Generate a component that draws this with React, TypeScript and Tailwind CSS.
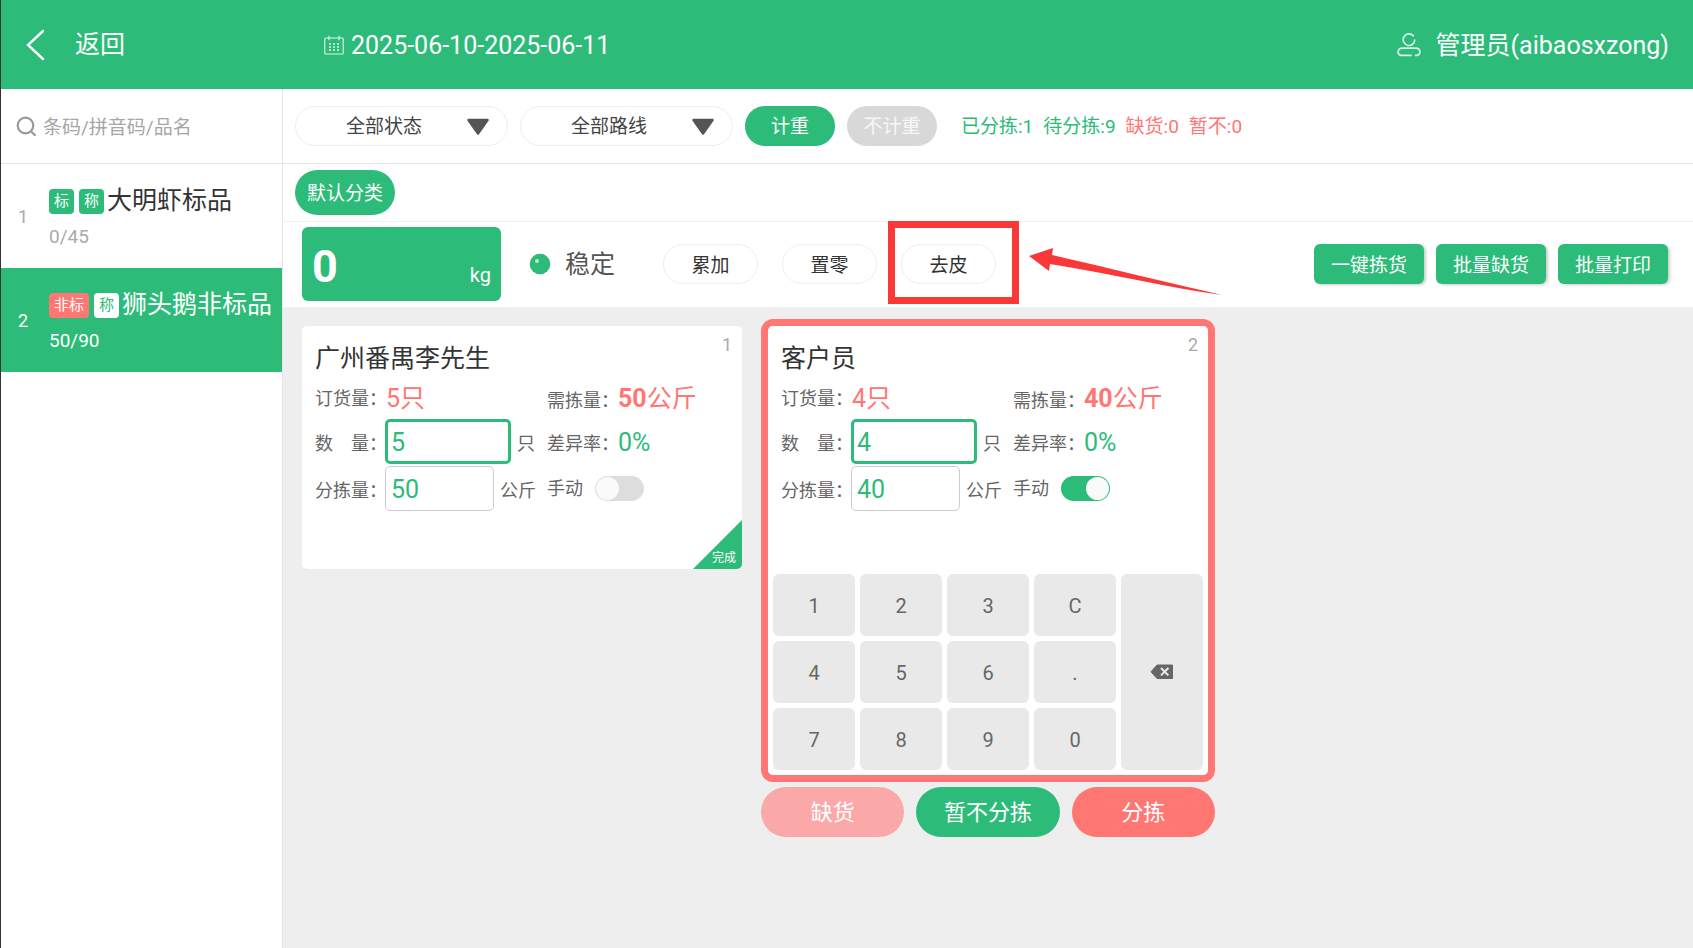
import React, { useState } from 'react';
import clsx from 'clsx';

interface Goods {
    id: number;
    name: string;
    standard: boolean;
    progress: string;
}

interface Order {
    id: number;
    customer: string;
    ordered: string;
    needed: string;
    count: string;
    sorted: string;
    manual: boolean;
    done: boolean;
}

const goodsList: Goods[] = [
    { id: 1, name: '大明虾标品', standard: true, progress: '0/45' },
    { id: 2, name: '狮头鹅非标品', standard: false, progress: '50/90' },
];

const orders: Order[] = [
    { id: 1, customer: '广州番禺李先生', ordered: '5', needed: '50', count: '5', sorted: '50', manual: false, done: true },
    { id: 2, customer: '客户员', ordered: '4', needed: '40', count: '4', sorted: '40', manual: true, done: false },
];

const keys = ['1', '2', '3', 'C', '4', '5', '6', '.', '7', '8', '9', '0'];

const CalendarIcon = () => (
    <svg className="opacity-85" width="20" height="20" viewBox="0 0 20 20" fill="none" stroke="currentColor" strokeWidth="1.1">
        <rect x="0.8" y="3" width="18.4" height="16" rx="1" />
        <path d="M5 0.8v4.4M15 0.8v4.4" />
        <path d="M5 9h2M9 9h2M13 9h2M5 12h2M9 12h2M13 12h2M5 15h2M9 15h2M13 15h2" strokeWidth="1.5" />
    </svg>
);

const UserIcon = () => (
    <svg className="opacity-80" width="24" height="24" viewBox="0 0 24 24" fill="none" stroke="currentColor" strokeWidth="1.7" strokeLinecap="round">
        <path d="M16.4 2.9A5.8 5.8 0 1 0 17.8 7" />
        <path d="M14 22.4H4.4a3.3 3.3 0 0 1-3.3-3.4c0-2.4 1.8-3.8 4.2-3.8h13.4c2.4 0 4.2 1.4 4.2 3.8a3.3 3.3 0 0 1-3.3 3.4h-1" />
    </svg>
);

const Header = () => (
    <header className="flex h-[89px] items-center bg-[#2dbb79] text-[25px] text-white">
        <div className="flex w-[323px] shrink-0 items-center pl-6">
            <button className="flex items-center gap-[30px]">
                <svg width="20" height="32" viewBox="0 0 20 32" fill="none" stroke="currentColor" strokeWidth="2.4" strokeLinecap="round">
                    <path d="M18 2L3 16l15 14" />
                </svg>
                返回
            </button>
        </div>
        <button className="flex items-center gap-[7px]">
            <CalendarIcon />
            <span className="pt-0.5">2025-06-10-2025-06-11</span>
        </button>
        <div className="ml-auto flex items-center gap-[15px] pr-6">
            <UserIcon />
            <span className="pt-0.5">管理员(aibaosxzong)</span>
        </div>
    </header>
);

const Tag = ({ text, color }: { text: string; color: string }) => (
    <span className={clsx('rounded-sm px-[5px] text-[15px] leading-[25px]', color)}>{text}</span>
);

const Sidebar = () => {
    const [active, setActive] = useState(2);

    return (
        <aside className="w-[282px] shrink-0 border-r border-[#e6e6e6] bg-white">
            <label className="flex h-[75px] items-center gap-1.5 border-b border-[#e6e6e6] pl-[15px] text-[#999]">
                <svg className="shrink-0" width="21" height="21" viewBox="0 0 21 21" fill="none" stroke="currentColor" strokeWidth="2.2" strokeLinecap="round">
                    <circle cx="9.5" cy="9.5" r="7.8" />
                    <path d="M15 15.5l4 3.6" />
                </svg>
                <input
                    type="text"
                    aria-label="搜索"
                    placeholder="条码/拼音码/品名"
                    className="w-full min-w-0 pt-1 text-[19px] outline-none placeholder:text-[#a6a6a6]"
                />
            </label>
            {goodsList.map((item) => {
                const on = item.id === active;
                return (
                    <button
                        key={item.id}
                        onClick={() => setActive(item.id)}
                        className={clsx('flex h-[104px] w-full items-center text-left', on ? 'bg-[#2dbb79] text-white' : 'bg-white text-[#333]')}
                    >
                        <span className={clsx('w-12 shrink-0 pl-[17px] text-[18px]', !on && 'text-[#aaa]')}>{item.id}</span>
                        <span className="flex flex-col gap-1 pt-1.5">
                            <span className="flex items-center whitespace-nowrap">
                                <span className="mr-[3px] flex gap-[5px]">
                                    {item.standard ? (
                                        <Tag text="标" color="bg-[#2dbb79] text-white" />
                                    ) : (
                                        <Tag text="非标" color="bg-[#ff7673] text-white" />
                                    )}
                                    <Tag text="称" color={on ? 'bg-white text-[#2dbb79]' : 'bg-[#2dbb79] text-white'} />
                                </span>
                                <span className="text-[25px] leading-8">{item.name}</span>
                            </span>
                            <span className={clsx('text-[19px] leading-8', !on && 'text-[#aaa]')}>{item.progress}</span>
                        </span>
                    </button>
                );
            })}
        </aside>
    );
};

const FilterSelect = ({ label }: { label: string }) => (
    <div className="relative">
        <select
            aria-label={label}
            className="h-10 w-[213px] appearance-none rounded-full border border-[#eee] bg-white pt-1 pl-[50px] text-[19px] text-[#444] outline-none"
        >
            <option>{label}</option>
        </select>
        <svg className="pointer-events-none absolute top-3 right-[18px]" width="24" height="18" viewBox="0 0 24 18">
            <path d="M2.5 2h19l-9.5 13.5z" fill="#555" stroke="#555" strokeWidth="2.5" strokeLinejoin="round" />
        </svg>
    </div>
);

const FilterBar = () => (
    <div className="flex h-[75px] items-center gap-3 border-b border-[#e6e6e6] px-3 pb-px text-[19px]">
        <FilterSelect label="全部状态" />
        <FilterSelect label="全部路线" />
        <button className="h-10 w-[90px] rounded-full bg-[#2dbb79] pt-1 text-white">计重</button>
        <button className="h-10 w-[90px] rounded-full bg-[#d8d8d8] pt-1 text-white/80">不计重</button>
        <div className="ml-3 flex gap-2.5 pt-1 text-[#2dbb79]">
            <span>已分拣:1</span>
            <span>待分拣:9</span>
            <span className="text-[#ff7673]">缺货:0</span>
            <span className="text-[#ff7673]">暂不:0</span>
        </div>
    </div>
);

const pill = 'h-10 w-[95px] rounded-full border border-[#eee] bg-white pt-1 text-[19px] text-[#333]';

const ScaleBar = () => (
    <div className="flex h-[85px] items-center pr-[25px] pb-px pl-[19px]">
        <div className="flex h-[74px] w-[199px] items-end justify-between rounded-md bg-[#2dbb79] px-2.5 text-white">
            <span className="self-center pt-1 text-[45px] leading-none font-bold">0</span>
            <span className="pb-3 text-[20px] leading-7">kg</span>
        </div>
        <svg className="ml-7 shrink-0" width="22" height="22" viewBox="0 0 22 22">
            <circle cx="11" cy="11" r="10.3" fill="#2dbb79" />
            <circle cx="8" cy="8" r="2" fill="#b5e9cf" />
        </svg>
        <span className="ml-3.5 pt-0.5 text-[25px] text-[#555]">稳定</span>
        <div className="ml-12 flex gap-6">
            <button className={pill}>累加</button>
            <button className={pill}>置零</button>
            <div className="relative">
                <button className={pill}>去皮</button>
                {/* callout around the tare button */}
                <div className="pointer-events-none absolute -top-[23px] -right-[23px] -bottom-5 -left-[13px] border-[7px] border-[#fb3838]" />
                <svg className="pointer-events-none absolute top-0 left-32" width="194" height="54" viewBox="0 0 194 54">
                    <path d="M0 12L24 4l-1 7C80 24 140 39 193 51C140 44 80 29 21 20l-1 7z" fill="#fb3838" />
                </svg>
            </div>
        </div>
        <div className="ml-auto flex gap-3">
            {['一键拣货', '批量缺货', '批量打印'].map((text) => (
                <button key={text} className="h-10 w-[110px] rounded-md bg-[#2dbb79] pt-1 text-[19px] text-white shadow-[2px_1px_3px_rgba(0,0,0,0.2)]">
                    {text}
                </button>
            ))}
        </div>
    </div>
);

const OrderForm = ({ order }: { order: Order }) => {
    const [manual, setManual] = useState(order.manual);

    return (
        <div className="grid grid-cols-[232px_1fr] items-center text-[18px] text-[#666]">
            <div className="flex h-10 items-center">
                <span className="w-[71px] whitespace-nowrap">订货量：</span>
                <span className="pt-0.5 text-[25px] text-[#ff7673]">{order.ordered}只</span>
            </div>
            <div className="flex h-10 items-center">
                <span className="w-[71px] pt-1 whitespace-nowrap">需拣量：</span>
                <span className="pt-0.5 text-[25px] text-[#ff7673]">
                    <b>{order.needed}</b>公斤
                </span>
            </div>
            <label className="flex h-[47px] items-center">
                <span className="w-[70px] pt-1 whitespace-nowrap">数　量：</span>
                <input
                    type="text"
                    defaultValue={order.count}
                    className="mr-1.5 h-[45px] w-[126px] rounded-[5px] border-[3px] border-[#2dbb79] pt-0.5 pl-[3px] text-[25px] text-[#2dbb79] outline-none"
                />
                <span className="pt-1">只</span>
            </label>
            <div className="flex h-[47px] items-center">
                <span className="w-[71px] pt-1 whitespace-nowrap">差异率：</span>
                <span className="pt-0.5 text-[25px] text-[#2dbb79]">0%</span>
            </div>
            <label className="flex h-[47px] items-center">
                <span className="w-[70px] pt-1 whitespace-nowrap">分拣量：</span>
                <input
                    type="text"
                    defaultValue={order.sorted}
                    className="mr-1.5 h-[45px] w-[109px] rounded-[5px] border border-[#ccc] pt-0.5 pl-[5px] text-[25px] text-[#2dbb79] outline-none"
                />
                <span className="pt-1">公斤</span>
            </label>
            <label className="flex h-[47px] items-center gap-3">
                手动
                <span className="relative flex">
                    <input
                        type="checkbox"
                        checked={manual}
                        onChange={(e) => setManual(e.target.checked)}
                        className="peer h-[25px] w-[49px] appearance-none rounded-full bg-[#ddd] checked:bg-[#2dbb79]"
                    />
                    <span className="pointer-events-none absolute top-px left-px size-[23px] rounded-full bg-[#fafafa] peer-checked:left-[25px]" />
                </span>
            </label>
        </div>
    );
};

const Keypad = () => (
    <div className="grid grid-cols-5 grid-rows-3 gap-[5px] p-[5px] text-[20px] text-[#666]">
        {keys.map((key) => (
            <button key={key} className="h-[62px] rounded-md bg-[#e9e9e9] pt-0.5">
                {key}
            </button>
        ))}
        <button aria-label="退格" className="col-start-5 row-span-3 row-start-1 flex items-center justify-center rounded-md bg-[#e9e9e9]">
            <svg width="24" height="16" viewBox="0 0 24 16">
                <path d="M7 1h15.5v13.5H7L1 7.8z" fill="#666" stroke="#666" strokeLinejoin="round" />
                <path d="M11 4l7.4 7.4M18.4 4L11 11.4" stroke="#e9e9e9" strokeWidth="2" />
            </svg>
        </button>
    </div>
);

const OrderCard = ({ order, active }: { order: Order; active: boolean }) => (
    <div className="flex flex-col gap-[5px]">
        <section className={clsx('rounded-xl border-[7px]', active ? 'border-[#ff7673]' : 'border-transparent')}>
            <div className="relative rounded-[5px] bg-white">
                <div className="h-[243px] px-[13px] pt-3.5">
                    <h2 className="text-[25px] leading-[38px] text-[#333]">{order.customer}</h2>
                    <span className="absolute top-[7px] right-2.5 text-[18px] leading-6 text-[#aaa]">{order.id}</span>
                    <OrderForm order={order} />
                </div>
                {order.done && (
                    <div className="absolute right-0 bottom-0 size-[49px] overflow-hidden rounded-br-[5px]">
                        <div className="size-full bg-[#2dbb79] [clip-path:polygon(100%_0,100%_100%,0_100%)]" />
                        <span className="absolute right-1.5 bottom-[3px] text-[12px] leading-4 text-white">完成</span>
                    </div>
                )}
                {active && <Keypad />}
            </div>
        </section>
        {active && (
            <div className="grid grid-cols-3 gap-3 text-[22px] text-white">
                <button className="h-[50px] rounded-full bg-[#faa8a8]">缺货</button>
                <button className="h-[50px] rounded-full bg-[#2dbb79]">暂不分拣</button>
                <button className="h-[50px] rounded-full bg-[#ff7673]">分拣</button>
            </div>
        )}
    </div>
);

export default function App() {
    return (
        <div className="flex min-h-screen flex-col border-l border-[#333] bg-[#eee] font-[Roboto,'Noto_Sans_CJK_SC',sans-serif]">
            <Header />
            <div className="flex flex-1">
                <Sidebar />
                <main className="min-w-0 flex-1">
                    <div className="bg-white">
                        <FilterBar />
                        <nav className="flex h-[58px] items-center border-b border-[#eee] px-3">
                            <button className="h-[45px] rounded-full bg-[#2dbb79] px-3 pt-1 text-[19px] text-white">默认分类</button>
                        </nav>
                        <ScaleBar />
                    </div>
                    <div className="grid grid-cols-3 items-start gap-3 p-3">
                        {orders.map((order) => (
                            <OrderCard key={order.id} order={order} active={!order.done} />
                        ))}
                    </div>
                </main>
            </div>
        </div>
    );
}
